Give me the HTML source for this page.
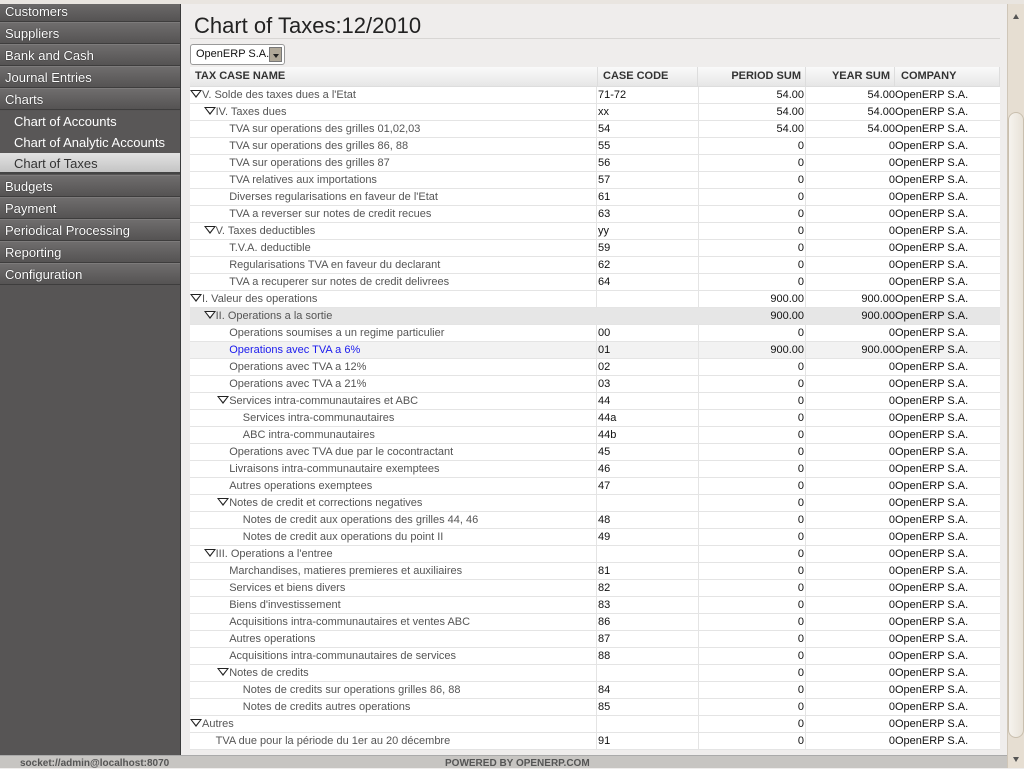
<!DOCTYPE html>
<html><head><meta charset="utf-8"><style>
*{margin:0;padding:0;box-sizing:border-box}
body{width:1024px;height:768px;overflow:hidden;background:#efedec;font-family:"Liberation Sans",sans-serif;position:relative}
#top{position:absolute;left:0;top:0;width:1024px;height:4px;background:#e9e5e0;z-index:5}
#side{position:absolute;left:0;top:0;width:181px;height:755px;background:#575555;border-right:1px solid #3a3a3a}
.mi{position:absolute;left:0;width:180px;height:22px;background:linear-gradient(#6f6d6d,#555353);border-bottom:1px solid #3e3d3d;border-top:1px solid #7d7b7b;color:#fff;font-size:13px;line-height:21px;padding-left:5px;text-shadow:0 0 1px #000}
.sub{position:absolute;left:0;width:180px;height:21px;color:#fff;font-size:13px;line-height:22px;padding-left:14px;background:#595757}
.sel{background:linear-gradient(#e2e2e2,#c4c4c4);color:#333;text-shadow:none;border-bottom:2px solid #444}
h1{position:absolute;left:194px;top:13px;font-size:22px;font-weight:normal;color:#222}
#hl{position:absolute;left:190px;top:38px;width:810px;height:1px;background:#d8d6d4}
#sel{position:absolute;left:190px;top:44px;width:95px;height:21px;border:1px solid #999;border-radius:3px;background:#fff;font-size:11px;line-height:19px;padding-left:5px;color:#111}
#sel b{position:absolute;right:2px;top:2px;width:13px;height:15px;background:#b0a898;border:1px solid #777}
#sel b:after{content:"";position:absolute;left:3px;top:6px;border:3px solid transparent;border-top:4px solid #222}
#tbl{position:absolute;left:190px;top:67px;width:810px;height:683px;background:#fff}
.hd{position:absolute;top:0;height:20px;background:linear-gradient(#fafafa,#e6e6e6);font-size:11px;font-weight:bold;color:#333;line-height:19px;border-right:1px solid #ddd;border-bottom:1px solid #ddd}
.r{position:absolute;left:0;width:810px;height:17px;border-bottom:1px solid #e4e4e4;font-size:11px;line-height:16px}
.r div{position:absolute;top:0;height:16px;white-space:nowrap}
.n{left:0;width:407px;color:#555;border-right:1px solid #e4e4e4}
.c{left:408px;width:101px;color:#111;border-right:1px solid #e4e4e4;padding-left:0}
.p{left:508px;width:108px;text-align:right;color:#111;border-right:1px solid #e4e4e4;padding-right:1px}
.y{left:616px;width:89px;text-align:right;color:#111}
.co{left:705px;width:105px;color:#111}
.t{display:inline-block;width:0;height:0;border-left:6px solid transparent;border-right:6px solid transparent;border-top:8px solid #222;position:relative;top:0px;margin-right:0}
.t:after{content:"";position:absolute;left:-4px;top:-7px;border-left:4px solid transparent;border-right:4px solid transparent;border-top:5px solid #fff}
.g{background:#e6e6e6}.g div{border-color:#e6e6e6}
.h{background:#f2f2f2}
#sb{position:absolute;left:1007px;top:0;width:17px;height:768px;background:#e6ded2;border-left:1px solid #cfc6b8}
#th{position:absolute;left:1008px;top:112px;width:16px;height:626px;background:linear-gradient(90deg,#f6f3ee,#e8e2d8);border:1px solid #c9bfae;border-radius:8px}
#foot{position:absolute;left:0;top:755px;width:1007px;height:13px;background:#c7c5c2;border-top:1px solid #aaa;font-size:10px;color:#555;font-weight:bold}
</style></head><body>
<div id="top"></div>
<div id="side">
<div class="mi" style="top:0">Customers</div>
<div class="mi" style="top:22px">Suppliers</div>
<div class="mi" style="top:44px">Bank and Cash</div>
<div class="mi" style="top:66px">Journal Entries</div>
<div class="mi" style="top:88px">Charts</div>
<div class="sub" style="top:111px">Chart of Accounts</div>
<div class="sub" style="top:132px">Chart of Analytic Accounts</div>
<div class="sub sel" style="top:153px">Chart of Taxes</div>
<div class="mi" style="top:175px">Budgets</div>
<div class="mi" style="top:197px">Payment</div>
<div class="mi" style="top:219px">Periodical Processing</div>
<div class="mi" style="top:241px">Reporting</div>
<div class="mi" style="top:263px">Configuration</div>
</div>
<h1>Chart of Taxes:12/2010</h1>
<div id="hl"></div>
<div id="sel">OpenERP S.A.<b></b></div>
<div id="tbl">
<div class="hd" style="left:0;width:408px;padding-left:5px">TAX CASE NAME</div>
<div class="hd" style="left:408px;width:100px;padding-left:5px">CASE CODE</div>
<div class="hd" style="left:508px;width:108px;text-align:right;padding-right:4px">PERIOD SUM</div>
<div class="hd" style="left:616px;width:89px;text-align:right;padding-right:4px">YEAR SUM</div>
<div class="hd" style="left:705px;width:105px;padding-left:6px">COMPANY</div>
<div id="rows"></div>
</div>
<div id="sb"><div style="position:absolute;left:5px;top:14px;border:3px solid transparent;border-bottom:5px solid #555;border-top:0"></div><div style="position:absolute;left:5px;top:757px;border:3px solid transparent;border-top:5px solid #555;border-bottom:0"></div></div>
<div id="th"></div>
<div id="foot"><span style="position:absolute;left:20px;top:2px">socket://admin@localhost:8070</span><span style="position:absolute;left:445px;top:2px">POWERED BY OPENERP.COM</span></div>
<script>
var d=[
[0,1,"V. Solde des taxes dues a l'Etat","71-72","54.00","54.00"],
[1,1,"IV. Taxes dues","xx","54.00","54.00"],
[2,0,"TVA sur operations des grilles 01,02,03","54","54.00","54.00"],
[2,0,"TVA sur operations des grilles 86, 88","55","0","0"],
[2,0,"TVA sur operations des grilles 87","56","0","0"],
[2,0,"TVA relatives aux importations","57","0","0"],
[2,0,"Diverses regularisations en faveur de l'Etat","61","0","0"],
[2,0,"TVA a reverser sur notes de credit recues","63","0","0"],
[1,1,"V. Taxes deductibles","yy","0","0"],
[2,0,"T.V.A. deductible","59","0","0"],
[2,0,"Regularisations TVA en faveur du declarant","62","0","0"],
[2,0,"TVA a recuperer sur notes de credit delivrees","64","0","0"],
[0,1,"I. Valeur des operations","","900.00","900.00"],
[1,1,"II. Operations a la sortie","","900.00","900.00","g"],
[2,0,"Operations soumises a un regime particulier","00","0","0"],
[2,0,"Operations avec TVA a 6%","01","900.00","900.00","h"],
[2,0,"Operations avec TVA a 12%","02","0","0"],
[2,0,"Operations avec TVA a 21%","03","0","0"],
[2,1,"Services intra-communautaires et ABC","44","0","0"],
[3,0,"Services intra-communautaires","44a","0","0"],
[3,0,"ABC intra-communautaires","44b","0","0"],
[2,0,"Operations avec TVA due par le cocontractant","45","0","0"],
[2,0,"Livraisons intra-communautaire exemptees","46","0","0"],
[2,0,"Autres operations exemptees","47","0","0"],
[2,1,"Notes de credit et corrections negatives","","0","0"],
[3,0,"Notes de credit aux operations des grilles 44, 46","48","0","0"],
[3,0,"Notes de credit aux operations du point II","49","0","0"],
[1,1,"III. Operations a l'entree","","0","0"],
[2,0,"Marchandises, matieres premieres et auxiliaires","81","0","0"],
[2,0,"Services et biens divers","82","0","0"],
[2,0,"Biens d'investissement","83","0","0"],
[2,0,"Acquisitions intra-communautaires et ventes ABC","86","0","0"],
[2,0,"Autres operations","87","0","0"],
[2,0,"Acquisitions intra-communautaires de services","88","0","0"],
[2,1,"Notes de credits","","0","0"],
[3,0,"Notes de credits sur operations grilles 86, 88","84","0","0"],
[3,0,"Notes de credits autres operations","85","0","0"],
[0,1,"Autres","","0","0"],
[1,0,"TVA due pour la période du 1er au 20 décembre","91","0","0"]];
var h="";
d.forEach(function(r,i){
var lvl=r[0],pad=12+13.6*lvl;
if(r[1])pad-=12;
var nm=(r[1]?'<span class="t"></span>':'')+r[2];
var st=r[6]=="h"?' style="color:#1a1aee"':'';
h+='<div class="r '+(r[6]||'')+'" style="top:'+(20+17*i)+'px"><div class="n" style="padding-left:'+pad+'px"><span'+st+'>'+nm+'</span></div><div class="c">'+r[3]+'</div><div class="p">'+r[4]+'</div><div class="y">'+r[5]+'</div><div class="co">OpenERP S.A.</div></div>';
});
document.getElementById("rows").innerHTML=h;
</script>
</body></html>
